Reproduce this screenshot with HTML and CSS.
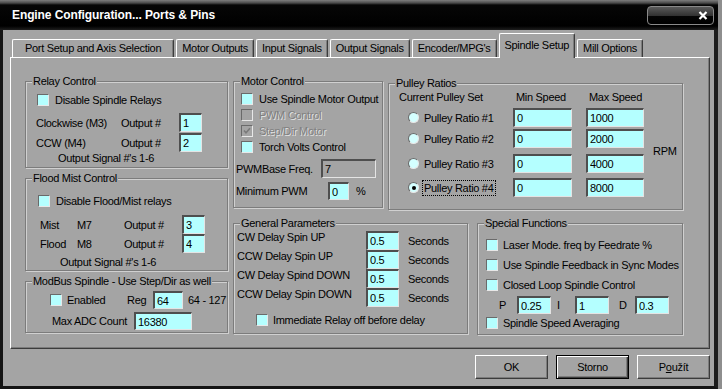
FILE: index.html
```html
<!DOCTYPE html>
<html lang="cs">
<head>
    <meta charset="UTF-8">
    <title>Engine Configuration... Ports &amp; Pins</title>
    <link rel="stylesheet" href="styles.css">
</head>
<body>
<div class="window">
    <div class="titlebar">
        <span class="title">Engine Configuration... Ports &amp; Pins</span>
        <div class="close">
            <svg width="10" height="9" viewBox="0 0 10 9"><path d="M1.5 1 L8.5 8 M8.5 1 L1.5 8" stroke="#fff" stroke-width="2.2" fill="none"/></svg>
        </div>
    </div>

    <div class="client">
        <div class="tabs">
            <div class="tab tab-first">Port Setup and Axis Selection</div>
            <div class="tab">Motor Outputs</div>
            <div class="tab">Input Signals</div>
            <div class="tab">Output Signals</div>
            <div class="tab">Encoder/MPG's</div>
            <div class="tab active">Spindle Setup</div>
            <div class="tab">Mill Options</div>
        </div>

        <div class="panel">
            <div class="col-left">
                <div class="group relay">
                    <div class="legend">Relay Control</div>
                    <label class="row check-row"><span class="check"></span>Disable Spindle Relays</label>
                    <div class="row out-row first-out"><span class="lbl-dir">Clockwise (M3)</span><span class="lbl-out">Output #</span><input class="field f-out" value="1"></div>
                    <div class="row out-row"><span class="lbl-dir">CCW (M4)</span><span class="lbl-out">Output #</span><input class="field f-out" value="2"></div>
                    <div class="row note">Output Signal #'s 1-6</div>
                </div>

                <div class="group flood">
                    <div class="legend">Flood Mist Control</div>
                    <label class="row check-row"><span class="check"></span>Disable Flood/Mist relays</label>
                    <div class="row out-row first-out"><span class="lbl-kind">Mist</span><span class="lbl-code">M7</span><span class="lbl-out">Output #</span><input class="field f-out" value="3"></div>
                    <div class="row out-row"><span class="lbl-kind">Flood</span><span class="lbl-code">M8</span><span class="lbl-out">Output #</span><input class="field f-out" value="4"></div>
                    <div class="row note">Output Signal #'s 1-6</div>
                </div>

                <div class="group modbus">
                    <div class="legend">ModBus Spindle - Use Step/Dir as well</div>
                    <div class="row mb-row"><span class="check"></span><span class="lbl-enabled">Enabled</span><span class="lbl-reg">Reg</span><input class="field f-reg" value="64"><span class="range">64 - 127</span></div>
                    <div class="row adc-row"><span class="lbl-adc">Max ADC Count</span><input class="field f-adc" value="16380"></div>
                </div>
            </div>

            <div class="col-right">
                <div class="top-row">
                    <div class="group motor">
                        <div class="legend">Motor Control</div>
                        <label class="row m-check"><span class="check"></span>Use Spindle Motor Output</label>
                        <label class="row m-check disabled"><span class="check"></span>PWM Control</label>
                        <label class="row m-check disabled"><span class="check"><svg width="8" height="8" viewBox="0 0 8 8"><path d="M1 3.5 L3 5.8 L7 1.2" stroke="#7a7a7a" stroke-width="1.6" fill="none"/></svg></span>Step/Dir Motor</label>
                        <label class="row m-check"><span class="check"></span>Torch Volts Control</label>
                        <div class="row freq-row"><span class="lbl-freq">PWMBase Freq.</span><input class="field f-freq" value="7" disabled></div>
                        <div class="row pwm-row"><span class="lbl-pwm">Minimum PWM</span><input class="field f-pwm" value="0"><span class="pct">%</span></div>
                    </div>

                    <div class="group pulley">
                        <div class="legend">Pulley Ratios</div>
                        <div class="row p-head"><span class="lbl-set">Current Pulley Set</span><span class="lbl-min">Min Speed</span><span>Max Speed</span></div>
                        <div class="p-body">
                            <div class="p-rows">
                                <div class="row p-row"><span class="radio"></span><span class="lbl-ratio">Pulley Ratio #1</span><input class="field f-speed" value="0"><input class="field f-speed f-max" value="1000"></div>
                                <div class="row p-row"><span class="radio"></span><span class="lbl-ratio">Pulley Ratio #2</span><input class="field f-speed" value="0"><input class="field f-speed f-max" value="2000"></div>
                                <div class="row p-row"><span class="radio"></span><span class="lbl-ratio">Pulley Ratio #3</span><input class="field f-speed" value="0"><input class="field f-speed f-max" value="4000"></div>
                                <div class="row p-row"><span class="radio selected"></span><span class="lbl-ratio"><span class="focus">Pulley Ratio #4</span></span><input class="field f-speed" value="0"><input class="field f-speed f-max" value="8000"></div>
                            </div>
                            <span class="rpm">RPM</span>
                        </div>
                    </div>
                </div>

                <div class="bottom-row">
                    <div class="group general">
                        <div class="legend">General Parameters</div>
                        <div class="row g-row"><span class="lbl-delay">CW Delay Spin UP</span><input class="field f-delay" value="0.5"><span class="unit">Seconds</span></div>
                        <div class="row g-row"><span class="lbl-delay">CCW Delay Spin UP</span><input class="field f-delay" value="0.5"><span class="unit">Seconds</span></div>
                        <div class="row g-row"><span class="lbl-delay">CW Delay Spind DOWN</span><input class="field f-delay" value="0.5"><span class="unit">Seconds</span></div>
                        <div class="row g-row"><span class="lbl-delay">CCW Delay Spin DOWN</span><input class="field f-delay" value="0.5"><span class="unit">Seconds</span></div>
                        <label class="row g-check"><span class="check"></span>Immediate Relay off before delay</label>
                    </div>

                    <div class="group special">
                        <div class="legend">Special Functions</div>
                        <label class="row s-check"><span class="check"></span>Laser Mode. freq by Feedrate %</label>
                        <label class="row s-check"><span class="check"></span>Use Spindle Feedback in Sync Modes</label>
                        <label class="row s-check"><span class="check"></span>Closed Loop Spindle Control</label>
                        <div class="row pid-row"><span class="lbl-p">P</span><input class="field f-pid" value="0.25"><span class="lbl-i">I</span><input class="field f-pid" value="1"><span class="lbl-d">D</span><input class="field f-pid" value="0.3"></div>
                        <label class="row s-check s-last"><span class="check"></span>Spindle Speed Averaging</label>
                    </div>
                </div>
            </div>
        </div>

        <div class="buttons">
            <button class="btn">OK</button>
            <button class="btn btn-default">Storno</button>
            <button class="btn">P<u>o</u>užít</button>
        </div>
    </div>
</div>
</body>
</html>
```

FILE: styles.css
```css
body {
    margin: 0;
    width: 722px;
    height: 389px;
    overflow: hidden;
    font-family: "Liberation Sans", Arial, sans-serif;
    font-size: 11px;
    letter-spacing: -0.3px;
    color: #000;
    background: #8e8e8e;
}

.window {
    height: 389px;
    display: flex;
    flex-direction: column;
    border-right: 4px solid #8e8e8e;
}

/* title bar */

.titlebar {
    height: 30px;
    flex-shrink: 0;
    display: flex;
    align-items: flex-start;
    padding: 0 4px 0 12px;
    background: linear-gradient(#7e7e7e 0, #4a4a4a 3px, #060606 5px, #000 26px, #1e1e1e 30px);
}

.title {
    color: #fff;
    font-size: 12px;
    font-weight: bold;
    letter-spacing: -0.1px;
    line-height: 30px;
}

.close {
    margin-left: auto;
    margin-top: 6px;
    width: 67px;
    height: 19px;
    box-sizing: border-box;
    border: 1px solid #8a8a8a;
    border-radius: 4px;
    background: linear-gradient(#5a5a5a, #333 50%, #050505 55%, #000);
    display: flex;
    align-items: center;
    justify-content: flex-end;
    padding-right: 5px;
}

/* client area */

.client {
    flex: 1;
    background: #a4a4a4;
    border-left: 3px solid #141414;
    border-right: 4px solid #1c1c1c;
    border-bottom: 3px solid #141414;
}

.tabs {
    display: flex;
    align-items: flex-end;
    height: 24px;
    padding: 3px 0 0 9px;
}

.tab {
    height: 18px;
    box-sizing: border-box;
    padding: 0 5px;
    margin-right: 2px;
    border: 1px solid;
    border-color: #fff #3c3c3c transparent #fff;
    border-bottom: none;
    border-radius: 2px 2px 0 0;
    box-shadow: inset -1px 0 #7c7c7c;
    line-height: 17px;
    white-space: nowrap;
}

.tab-first {
    padding: 0 12px;
}

.tab.active {
    height: 25px;
    margin-bottom: -1px;
    position: relative;
    z-index: 1;
    background: #a4a4a4;
    line-height: 23px;
}

.panel {
    margin-left: 7px;
    width: 700px;
    height: 292px;
    box-sizing: border-box;
    border: 1px solid;
    border-color: #fff #3c3c3c #3c3c3c #fff;
    box-shadow: inset -1px -1px #7c7c7c;
    display: flex;
    align-items: flex-start;
    padding: 23px 0 0 14px;
}

.col-left {
    width: 203px;
    display: flex;
    flex-direction: column;
}

.col-right {
    margin-left: 5px;
}

.top-row,
.bottom-row {
    display: flex;
    align-items: flex-start;
}

.bottom-row {
    margin-top: 13px;
}

/* group boxes */

.group {
    box-sizing: border-box;
    border: 1px solid #7c7c7c;
    box-shadow: inset 1px 1px #d0d0d0, 1px 1px #d0d0d0;
}

.legend {
    width: fit-content;
    height: 13px;
    line-height: 13px;
    margin: -7px 0 -6px 6px;
    padding: 0 1px;
    background: #a4a4a4;
    white-space: nowrap;
}

.row {
    display: flex;
    align-items: center;
    height: 19px;
    white-space: nowrap;
}

/* controls */

.field {
    box-sizing: border-box;
    height: 19px;
    margin: 0;
    padding: 0 2px;
    font: inherit;
    letter-spacing: inherit;
    color: #000;
    background: #b4ffff;
    border-style: solid;
    border-width: 2px 1px 1px 2px;
    border-color: #4e4e4e #e4e4e4 #e4e4e4 #4e4e4e;
    outline: none;
}

.field:disabled {
    background: #a4a4a4;
    color: #000;
}

.check {
    flex-shrink: 0;
    width: 12px;
    height: 12px;
    box-sizing: border-box;
    margin-right: 6px;
    background: #b4ffff;
    border: 1px solid;
    border-color: #6a6a6a #e8e8e8 #e8e8e8 #6a6a6a;
    display: flex;
    align-items: center;
    justify-content: center;
}

.disabled {
    color: #808080;
    text-shadow: 1px 1px 0 #e2e2e2;
}

.disabled .check {
    background: #a4a4a4;
}

.radio {
    flex-shrink: 0;
    width: 11px;
    height: 11px;
    box-sizing: border-box;
    margin-right: 5px;
    border-radius: 50%;
    background: #d4ffff;
    border: 1px solid;
    border-color: #6a6a6a #e8e8e8 #e8e8e8 #6a6a6a;
    display: flex;
    align-items: center;
    justify-content: center;
}

.radio.selected::after {
    content: "";
    width: 4px;
    height: 4px;
    border-radius: 50%;
    background: #000;
}

.focus {
    outline: 1px dotted #000;
    outline-offset: 1px;
}

/* relay control */

.relay {
    height: 87px;
}

.check-row {
    height: 18px;
}

.relay .check-row {
    margin-top: 9px;
    padding-left: 11px;
}

.out-row {
    padding-left: 10px;
}

.relay .first-out {
    margin-top: 4px;
}

.relay .out-row + .out-row {
    margin-top: 1px;
}

.lbl-dir {
    width: 85px;
}

.lbl-out {
    width: 58px;
}

.f-out {
    width: 23px;
}

.note {
    height: 14px;
    padding-left: 32px;
}

.relay .note {
    margin-top: -1px;
}

/* flood mist */

.flood {
    height: 93px;
    margin-top: 10px;
}

.flood .check-row {
    margin-top: 13px;
    padding-left: 12px;
}

.flood .first-out {
    margin-top: 5px;
}

.flood .out-row {
    padding-left: 14px;
}

.lbl-kind {
    width: 37px;
}

.lbl-code {
    width: 47px;
}

.flood .note {
    margin-top: 2px;
    padding-left: 34px;
}

/* modbus */

.modbus {
    height: 52px;
    margin-top: 10px;
}

.mb-row {
    height: 18px;
    margin-top: 9px;
    padding-left: 24px;
}

.mb-row .check {
    margin-right: 5px;
}

.lbl-enabled {
    width: 60px;
}

.lbl-reg {
    width: 26px;
}

.f-reg {
    width: 30px;
    height: 18px;
}

.range {
    margin-left: 5px;
}

.adc-row {
    height: 18px;
    margin-top: 3px;
    padding-left: 26px;
}

.lbl-adc {
    width: 82px;
}

.f-adc {
    width: 58px;
    height: 18px;
}

/* motor control */

.motor {
    width: 150px;
    height: 127px;
}

.m-check {
    height: 16px;
    padding-left: 7px;
}

.legend + .m-check {
    margin-top: 9px;
}

.freq-row {
    margin-top: 4px;
    padding-left: 2px;
}

.lbl-freq {
    width: 85px;
}

.f-freq {
    width: 55px;
}

.pwm-row {
    height: 18px;
    margin-top: 4px;
    padding-left: 2px;
}

.lbl-pwm {
    width: 92px;
}

.f-pwm {
    width: 21px;
    height: 18px;
}

.pct {
    margin-left: 7px;
}

/* pulley ratios */

.pulley {
    width: 295px;
    height: 127px;
    margin: 2px 0 0 5px;
}

.p-head {
    height: 16px;
    margin-top: 5px;
    padding-left: 10px;
}

.lbl-set {
    width: 117px;
}

.lbl-min {
    width: 73px;
}

.p-body {
    display: flex;
    align-items: center;
}

.p-rows {
    padding-left: 19px;
}

.p-row:nth-child(1) {
    margin-top: 3px;
}

.p-row:nth-child(2) {
    margin-top: 2px;
}

.p-row:nth-child(3) {
    margin-top: 6px;
}

.p-row:nth-child(4) {
    margin-top: 5px;
}

.lbl-ratio {
    width: 89px;
}

.f-speed {
    width: 59px;
}

.f-max {
    width: 58px;
    margin-left: 14px;
}

.rpm {
    margin-left: 9px;
}

/* general parameters */

.general {
    width: 235px;
    height: 111px;
}

.g-row {
    align-items: flex-start;
    padding-left: 3px;
}

.legend + .g-row {
    margin-top: 7px;
}

.lbl-delay {
    width: 129px;
    line-height: 13px;
}

.f-delay {
    width: 33px;
}

.unit {
    margin-left: 9px;
    padding-top: 4px;
    line-height: 13px;
}

.g-check {
    height: 16px;
    margin-top: 5px;
    padding-left: 22px;
}

.g-check .check {
    margin-right: 5px;
}

/* special functions */

.special {
    width: 206px;
    height: 112px;
    margin-left: 9px;
}

.s-check {
    height: 18px;
    margin-top: 1px;
    padding-left: 8px;
    overflow: hidden;
}

.s-check .check {
    margin-right: 5px;
}

.legend + .s-check {
    margin-top: 12px;
}

.s-check + .s-check {
    margin-top: 2px;
}

.pid-row {
    height: 18px;
    margin-top: 2px;
    padding-left: 21px;
}

.lbl-p {
    width: 18px;
}

.lbl-i {
    width: 18px;
    margin-left: 6px;
}

.lbl-d {
    width: 16px;
    margin-left: 10px;
}

.f-pid {
    width: 34px;
    height: 18px;
}

.s-last {
    height: 16px;
}

/* buttons */

.buttons {
    display: flex;
    justify-content: flex-end;
    gap: 8px;
    margin-top: 6px;
    padding-right: 4px;
}

.btn {
    width: 73px;
    height: 24px;
    padding: 0;
    font: inherit;
    letter-spacing: inherit;
    color: #000;
    background: #a4a4a4;
    border: 1px solid;
    border-color: #fff #3c3c3c #3c3c3c #fff;
    box-shadow: inset -1px -1px #7c7c7c;
}

.btn-default {
    border-color: #000;
    box-shadow: inset 1px 1px #fff, inset -1px -1px #3c3c3c, inset -2px -2px #7c7c7c;
}
```
